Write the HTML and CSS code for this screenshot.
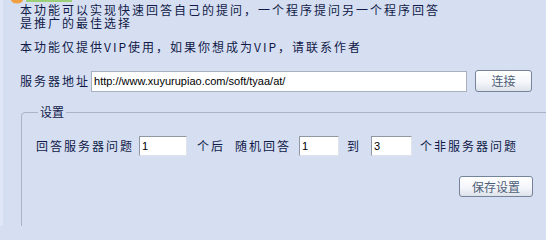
FILE: index.html
```html
<!DOCTYPE html>
<html lang="zh-CN">
<head>
<meta charset="utf-8">
<title>设置</title>
<link rel="stylesheet" href="styles.css">
</head>
<body>
<div class="page">
  <svg class="logo" width="80" height="6" viewBox="0 0 80 6" aria-hidden="true">
    <ellipse cx="17" cy="0" rx="6" ry="3.5" fill="#f0a040"/>
    <rect x="26" y="0" width="46" height="2" fill="#9ccf7a"/>
  </svg>
  <p class="intro">本功能可以实现快速回答自己的提问，一个程序提问另一个程序回答<br>是推广的最佳选择</p>
  <p class="vip">本功能仅提供VIP使用，如果你想成为VIP，请联系作者</p>
  <div class="server-row">
    <span class="label">服务器地址</span>
    <input class="url" type="text" value="http://www.xuyurupiao.com/soft/tyaa/at/">
    <button class="btn btn-connect" type="button">连接</button>
  </div>
  <fieldset class="settings">
    <legend class="legend">设置</legend>
    <div class="rule-row">
      <span class="label">回答服务器问题</span>
      <input class="num num-a" type="text" value="1">
      <span class="label gap10">个后</span>
      <span class="label gap10">随机回答</span>
      <input class="num num-b" type="text" value="1">
      <span class="label gap8">到</span>
      <input class="num num-c" type="text" value="3">
      <span class="label gap8">个非服务器问题</span>
    </div>
    <div class="save-row">
      <button class="btn btn-save" type="button">保存设置</button>
    </div>
  </fieldset>
</div>
</body>
</html>
```
FILE: styles.css
```css
html, body {
  margin: 0;
  padding: 0;
  height: 226px;
  overflow: hidden;
}
body {
  width: 546px;
  background: #d6dff2;
  font-family: "Noto Sans CJK SC", "Liberation Sans", sans-serif;
  font-size: 12px;
  color: #111a48;
}
.page {
  position: relative;
  height: 226px;
  overflow: hidden;
  box-sizing: border-box;
  border-left: 3px solid #dfe6f6;
  padding-top: 3px;
}
.logo {
  position: absolute;
  left: -3px;
  top: 0;
}
.intro, .vip {
  margin: 0;
  padding-left: 17px;
  line-height: 13px;
  letter-spacing: 2px;
}
.vip {
  margin-top: 11px;
}
.label {
  letter-spacing: 2px;
  line-height: 14px;
  white-space: nowrap;
}
.server-row {
  display: flex;
  align-items: center;
  margin-top: 17px;
  padding-left: 17px;
}
.url {
  margin: 0 0 0 1px;
  width: 376px;
  height: 21px;
  box-sizing: border-box;
  padding: 0 2px;
  border: 1px solid #a7b0bd;
  background: #fff;
  font-family: "Liberation Sans", sans-serif;
  font-size: 11px;
  color: #000;
  outline: none;
}
.btn {
  box-sizing: border-box;
  padding: 0;
  border: 1px solid #75849a;
  border-radius: 3px;
  background: linear-gradient(#ffffff 0%, #f4f6fa 55%, #dde2ea 100%);
  font-family: "Noto Sans CJK SC", sans-serif;
  font-size: 12px;
  color: #4e5f78;
  line-height: 14px;
}
.btn-connect {
  margin-left: 8px;
  width: 57px;
  height: 22px;
}
.settings {
  margin: 13px -10px 0 18px;
  padding: 17px 22px 60px 14px;
  border: 1px solid #a9b5c9;
  border-top-left-radius: 4px;
}
.legend {
  margin-left: 2px;
  padding: 0 2px;
  line-height: 14px;
  letter-spacing: 0;
}
.rule-row {
  display: flex;
  align-items: center;
}
.num {
  margin: 0;
  height: 20px;
  box-sizing: border-box;
  padding: 0 2px;
  border: 1px solid;
  border-color: #8f97a3 #dfe3ea #dfe3ea #8f97a3;
  background: #fff;
  font-family: "Liberation Sans", sans-serif;
  font-size: 11px;
  color: #000;
  outline: none;
}
.num-a { margin-left: 5px; width: 48px; }
.num-b { margin-left: 8px; width: 40px; }
.num-c { margin-left: 10px; width: 41px; }
.gap10 { margin-left: 10px; }
.gap8 { margin-left: 8px; }
.save-row {
  display: flex;
  justify-content: flex-end;
  margin-top: 20px;
}
.btn-save {
  width: 74px;
  height: 21px;
}
```
